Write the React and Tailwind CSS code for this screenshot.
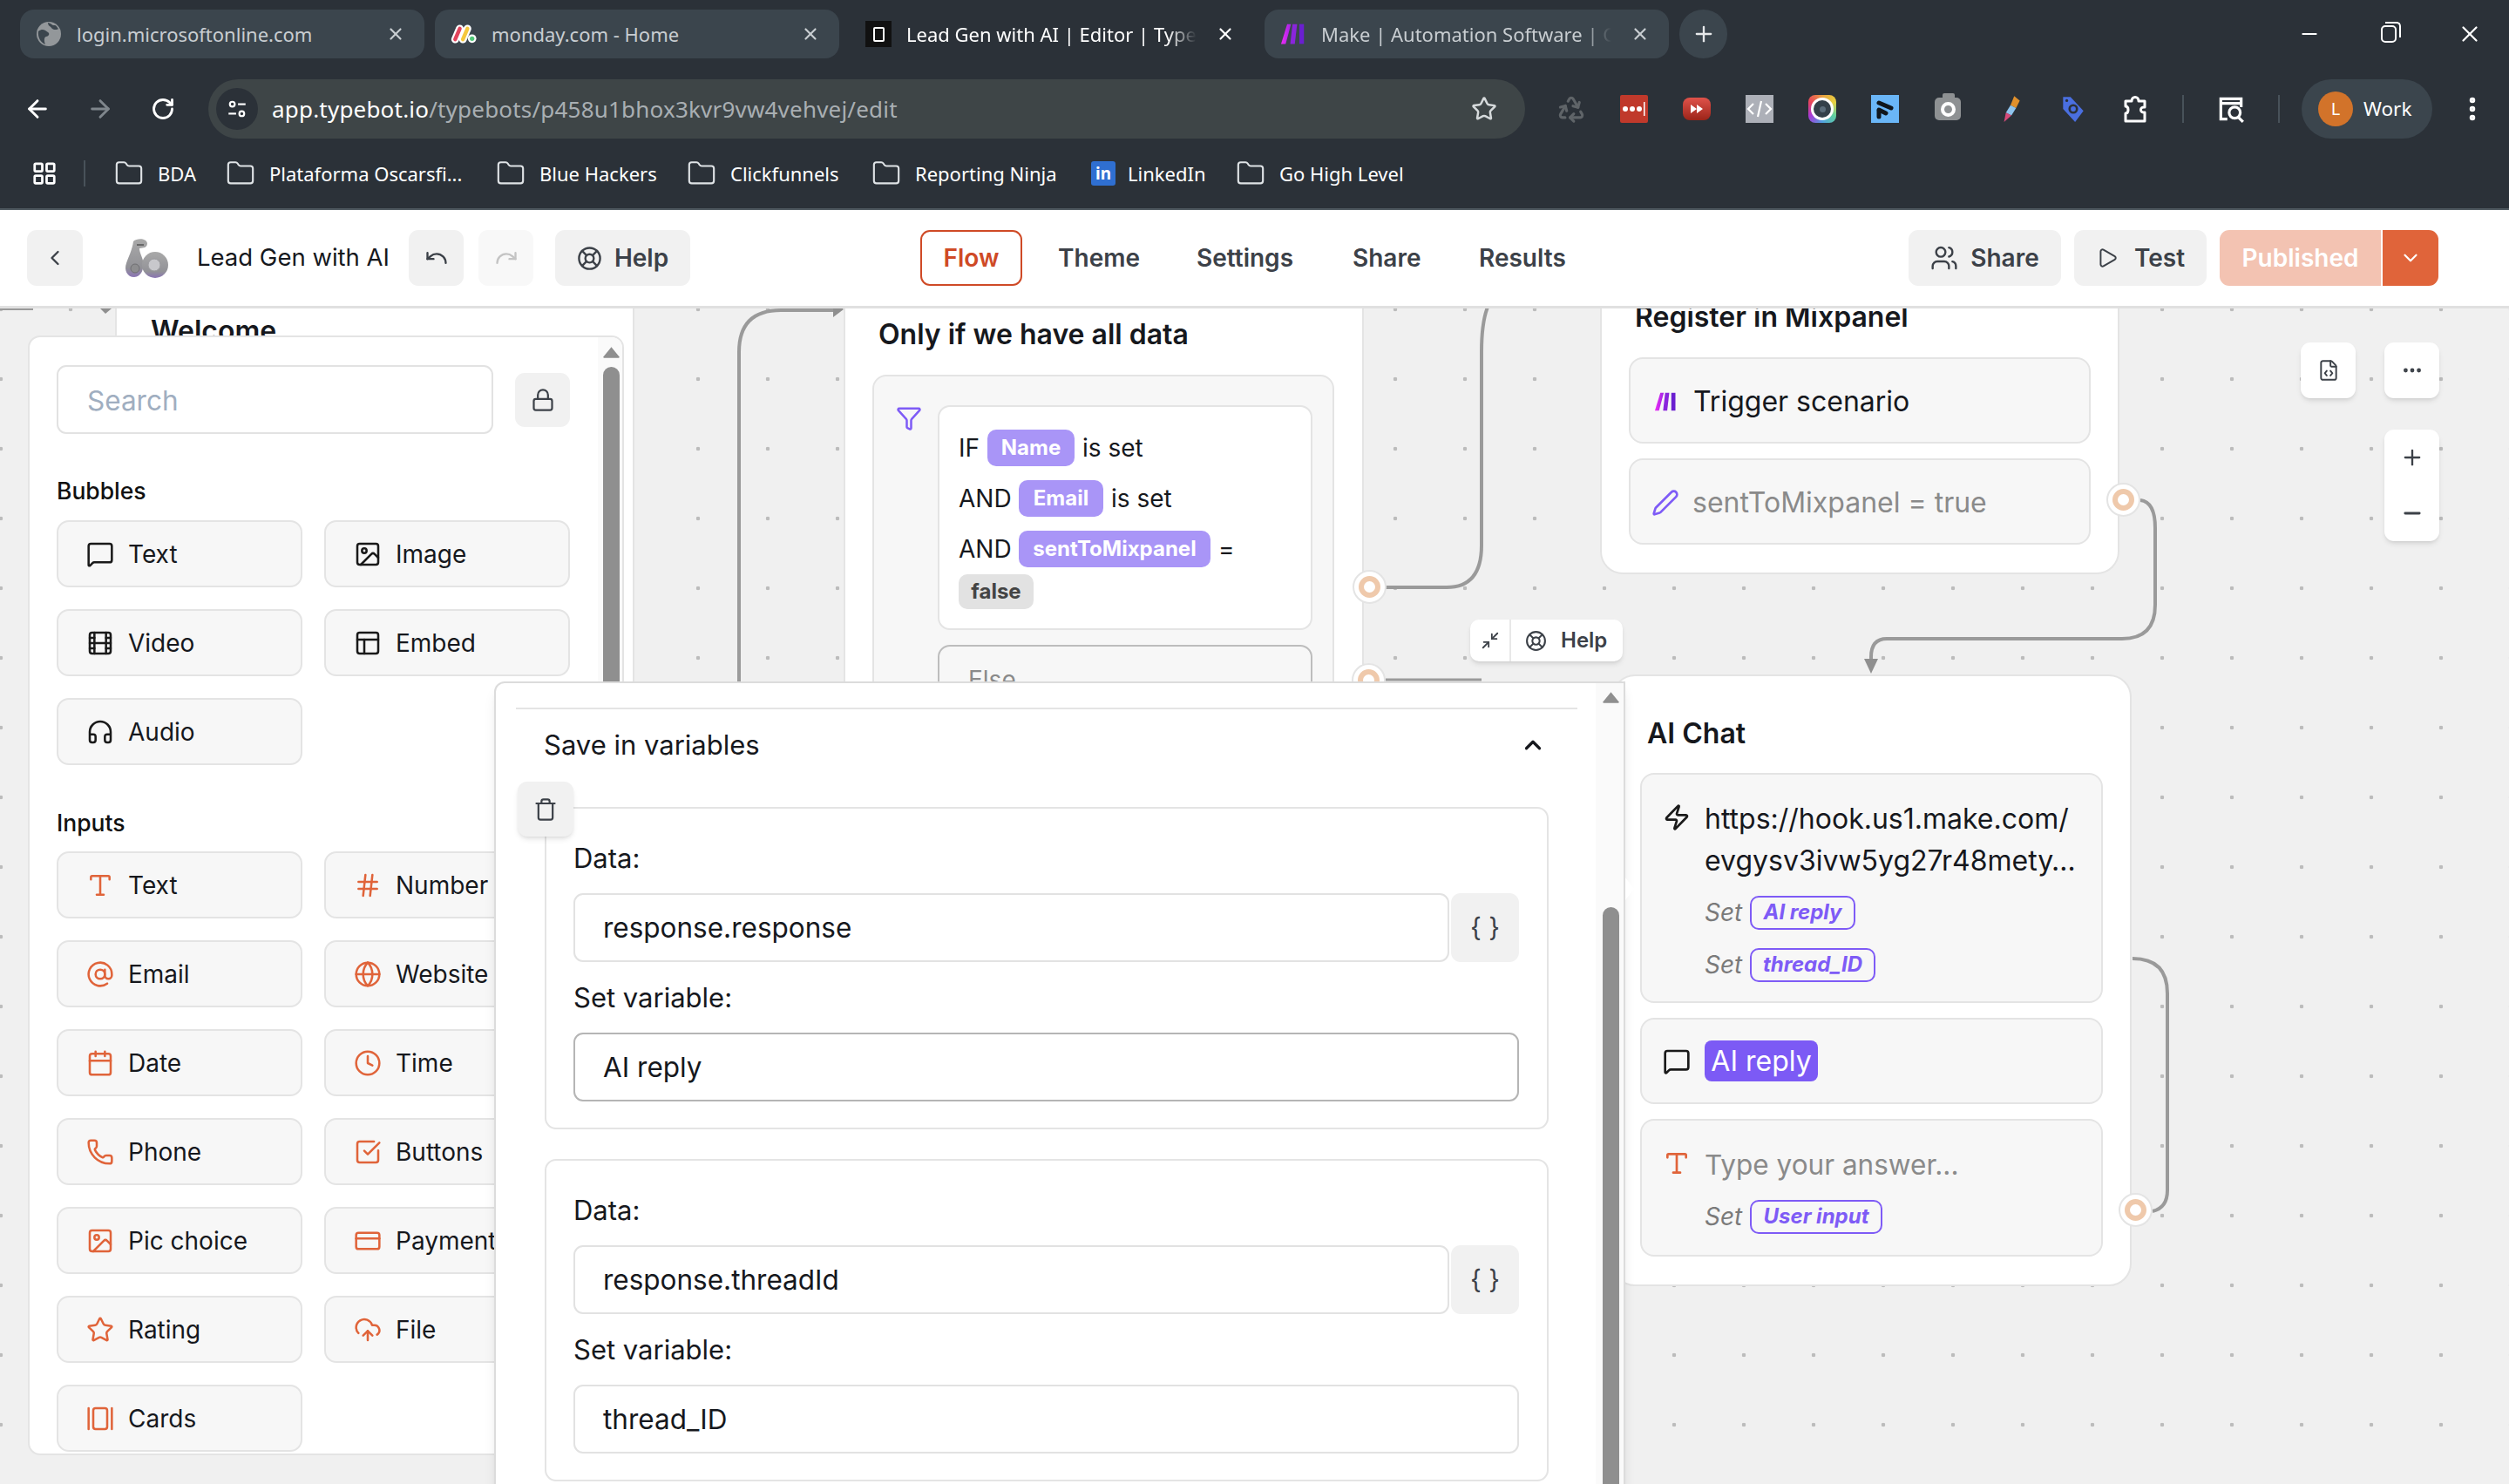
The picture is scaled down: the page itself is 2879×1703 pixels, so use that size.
import React from "react";
import {
  ArrowLeft, ArrowRight, AtSign, Calendar, ChevronDown, ChevronLeft, ChevronUp, Clock, CloudUpload,
  CreditCard, Ellipsis, EllipsisVertical, FileCode, Film, Folder, Funnel, GalleryHorizontal, Globe, Hash,
  Headphones, Image, LayoutGrid, LifeBuoy, Lock, MessageSquare, Minimize2, Minus, PanelsTopLeft, Pen, Phone,
  Play, Plus, Recycle, Redo, RotateCw, SquareCheckBig, Star, Trash, Type, Undo, Users, X, Zap,
} from "lucide-react";

const ui = "font-['Inter',sans-serif]";
const chromeFont = "font-['Noto_Sans',sans-serif]";

const bubbles = [
  { label: "Text", icon: MessageSquare },
  { label: "Image", icon: Image },
  { label: "Video", icon: Film },
  { label: "Embed", icon: PanelsTopLeft },
  { label: "Audio", icon: Headphones },
];

const inputs = [
  { label: "Text", icon: Type },
  { label: "Number", icon: Hash },
  { label: "Email", icon: AtSign },
  { label: "Website", icon: Globe },
  { label: "Date", icon: Calendar },
  { label: "Time", icon: Clock },
  { label: "Phone", icon: Phone },
  { label: "Buttons", icon: SquareCheckBig },
  { label: "Pic choice", icon: Image },
  { label: "Payment", icon: CreditCard },
  { label: "Rating", icon: Star },
  { label: "File", icon: CloudUpload },
  { label: "Cards", icon: GalleryHorizontal },
];

const MakeLogo = ({ className }) => (
  <svg viewBox="0 0 32 28" className={className}>
    <defs>
      <linearGradient id="makeGrad" x1="0" x2="1" y1="0" y2="0">
        <stop offset="0" stopColor="#f02cf5" />
        <stop offset="1" stopColor="#a024e6" />
      </linearGradient>
    </defs>
    <path d="M8 1h5L6 27H0z" fill="url(#makeGrad)" />
    <path d="M15 1h6l-3 26h-6z" fill="#8a25dc" />
    <path d="M24 1h6v26h-6z" fill="#6a1fd0" />
  </svg>
);

const TypebotLogo = () => (
  <svg viewBox="0 0 80 60" className="w-[80px] h-[60px] shrink-0">
    <defs>
      <linearGradient id="tbGrad" x1="0" x2="0" y1="0" y2="1">
        <stop offset="0" stopColor="#a9a9a9" />
        <stop offset="0.75" stopColor="#929297" />
        <stop offset="1" stopColor="#8a74b4" />
      </linearGradient>
    </defs>
    <path d="M23 11C27 7 38 7 39 13C39 19 34 18 30 19C30 24 33 28 34 33C36 42 32 52 24 52C16 52 12 44 15 36C17 30 22 20 23 11z" fill="url(#tbGrad)" />
    <circle cx="48" cy="38" r="15" fill="url(#tbGrad)" />
    <circle cx="47" cy="38" r="7" fill="#c8c8cc" stroke="#9a9a9e" />
    <circle cx="25" cy="42" r="5" fill="#8d8d8f" stroke="#6f6f72" />
    <path d="M27 15h8" stroke="#555" strokeWidth="1.5" />
  </svg>
);

const TuneIcon = () => (
  <svg viewBox="0 0 24 24" className="w-[26px] h-[26px]" fill="none" stroke="#fff" strokeWidth="2">
    <circle cx="7" cy="7" r="2.6" />
    <path d="M13 7h8" />
    <path d="M3 17h8" />
    <circle cx="17" cy="17" r="2.6" />
  </svg>
);

const Tab = ({ title, favicon, active, fade }) => (
  <div className={`w-[464px] h-[56px] rounded-[16px] flex items-center pl-[18px] pr-[22px] ${active ? "" : "bg-[#3b454d]"}`}>
    <div className="w-[30px] h-[30px] flex items-center justify-center shrink-0">{favicon}</div>
    <div className={`ml-[17px] w-[333px] overflow-hidden whitespace-nowrap text-[22px] ${active ? "text-white" : "text-[#c8cdd1]"} ${fade ? "[mask-image:linear-gradient(to_right,black_90%,transparent)]" : ""}`}>
      {title}
    </div>
    <X className={`ml-auto ${active ? "text-white" : "text-[#c8cdd1]"}`} size={22} strokeWidth={2.4} />
  </div>
);

const Ext = ({ children }) => <div className="w-[36px] h-[36px] flex items-center justify-center">{children}</div>;

const Bookmark = ({ label, w }) => (
  <div className="flex items-center gap-[16px]">
    <Folder size={34} strokeWidth={1.5} className="text-[#dfe3e6]" />
    <span className={`${w} whitespace-nowrap text-[22px] text-white`}>{label}</span>
  </div>
);

const HeaderButton = ({ className = "bg-[#f1f1f1] text-[#3c4148]", width = "", children }) => (
  <div className={`h-[64px] rounded-[11px] flex items-center justify-center ${width} ${className}`}>{children}</div>
);

const NavLink = ({ className, children }) => <span className={`text-[28px] font-semibold text-[#3c4148] whitespace-nowrap ${className}`}>{children}</span>;

const ToolCard = ({ label, icon: Icon, accent }) => (
  <div className="h-[77px] rounded-[14px] bg-[#f7f7f7] border-2 border-[#e4e4e4] flex items-center pl-[32px] gap-[16px] whitespace-nowrap">
    <Icon size={32} strokeWidth={1.9} className={accent ? "text-[#e0643a] shrink-0" : "text-[#1a1a1a] shrink-0"} />
    <span className="text-[28px] text-[#16181d]">{label}</span>
  </div>
);

const Triangle = ({ className }) => (
  <svg viewBox="0 0 20 14" className={className}>
    <path d="M10 1L19 12a1 1 0 0 1-1 2H2a1 1 0 0 1-1-2z" fill="#8f8f8f" />
  </svg>
);

const Port = ({ className }) => (
  <div className={`absolute w-[39px] h-[39px] rounded-full bg-white border-2 border-[#e4e4e4] flex items-center justify-center ${className}`}>
    <div className="w-[25px] h-[25px] rounded-full border-[6px] border-[#efc9ab] bg-white" />
  </div>
);

const VarPill = ({ className = "", children }) => (
  <span className={`h-[42px] rounded-[10px] bg-[#a995f7] text-white text-[24px] font-bold flex items-center justify-center ${className}`}>{children}</span>
);

const SetRow = ({ label, className, w }) => (
  <div className={`flex items-center gap-[11px] ${className}`}>
    <span className="w-[41px] italic text-[28px] text-[#7a7a7a]">Set</span>
    <span className={`h-[39px] ${w} rounded-[10px] border-2 border-[#7e5bf6] text-[#7e5bf6] text-[24px] italic font-bold flex items-center justify-center whitespace-nowrap`}>{label}</span>
  </div>
);

const Field = ({ value, className = "border-[#e2e2e2]", width }) => (
  <div className={`h-[79px] rounded-[11px] border-2 bg-white flex items-center pl-[32px] text-[31.5px] text-[#16181d] ${className} ${width}`}>{value}</div>
);

const VariableCard = ({ data, variable, focused, className = "" }) => (
  <div className={`w-[1152px] h-[370px] rounded-[13px] border-2 border-[#e4e4e4] pl-[31px] pr-[32px] ${className}`}>
    <div className="h-[40px] mt-[37px] flex items-center text-[31px] text-[#16181d]">Data:</div>
    <div className="mt-[20px] flex gap-[2px]">
      <Field value={data} width="w-[1005px]" />
      <div className="w-[78px] h-[79px] rounded-[11px] bg-[#f1f1f1] flex items-center justify-center text-[30px] text-[#3c4148]">{"{ }"}</div>
    </div>
    <div className="h-[40px] mt-[21px] flex items-center text-[31px] text-[#16181d]">Set variable:</div>
    <Field value={variable} width="w-[1085px] mt-[20px]" className={focused ? "border-[#b5b5b5]" : "border-[#e2e2e2]"} />
  </div>
);

const App = () => {
  return (
    <div className={`w-[2879px] h-[1703px] overflow-hidden flex flex-col bg-white ${ui}`}>
      {/* Browser chrome */}
      <div className={`bg-[#2b3138] h-[241px] shrink-0 border-b-2 border-[#505a60] ${chromeFont}`}>
        <div className="h-[91px] pt-[11px] pl-[23px] flex gap-[12px]">
          <Tab
            title="login.microsoftonline.com"
            favicon={
              <svg viewBox="0 0 28 28" className="w-[28px] h-[28px]">
                <circle cx="14" cy="14" r="14" fill="#93979a" />
                <path d="M2 11c5-4 8-1 11 1s0 5-2 5-3 4-1 9C5 24 1 18 2 11z" fill="#3b454d" />
                <path d="M13 1c5 1 4 3 7 3s3 2 5 4c-2 2-7 1-8-1s-4-2-4-6z" fill="#3b454d" />
              </svg>
            }
          />
          <Tab
            title="monday.com - Home"
            favicon={
              <svg viewBox="0 0 34 28" className="w-[32px] h-[28px]">
                <path d="M6 21L12 7" stroke="#fff" strokeWidth="10" strokeLinecap="round" />
                <path d="M16 21L22 7" stroke="#fff" strokeWidth="10" strokeLinecap="round" />
                <circle cx="28" cy="20" r="5.5" fill="#fff" />
                <path d="M6 21L12 7" stroke="#e2445c" strokeWidth="5" strokeLinecap="round" />
                <path d="M16 21L22 7" stroke="#f5c73d" strokeWidth="5" strokeLinecap="round" />
                <circle cx="28" cy="20" r="3" fill="#4fc878" />
              </svg>
            }
          />
          <Tab
            active
            fade
            title="Lead Gen with AI | Editor | Typebot"
            favicon={
              <div className="w-[30px] h-[30px] bg-[#111] flex items-center justify-center">
                <div className="w-[13px] h-[17px] border-2 border-white rounded-[2px]" />
              </div>
            }
          />
          <Tab fade title="Make | Automation Software | Connect" favicon={<MakeLogo className="w-[28px] h-[26px]" />} />
          <div className="w-[55px] h-[56px] rounded-full bg-[#3b454d] flex items-center justify-center">
            <Plus size={28} className="text-[#e6e8ea]" />
          </div>
          <div className="ml-[643px] flex items-center h-[56px] gap-[64px] text-white">
            <Minus size={26} />
            <div className="w-[28px] flex justify-center">
              <div className="relative w-[18px] h-[20px] border-2 border-white rounded-[5px]">
                <div className="absolute -top-[6px] left-[3px] w-[18px] h-[18px] border-t-2 border-r-2 border-white rounded-tr-[5px]" />
              </div>
            </div>
            <X size={30} strokeWidth={1.8} />
          </div>
        </div>

        <div className="h-[68px] flex items-center">
          <ArrowLeft size={32} strokeWidth={2.2} className="ml-[27px] text-white" />
          <ArrowRight size={32} strokeWidth={2.2} className="ml-[40px] text-[#7f868c]" />
          <RotateCw size={28} strokeWidth={2.4} className="ml-[42px] text-white" />
          <div className="ml-[38px] w-[1511px] h-[68px] rounded-full bg-[#3e4547] flex items-center pl-[9px] pr-[32px]">
            <div className="w-[48px] h-[48px] rounded-full bg-[#2b3138] flex items-center justify-center">
              <TuneIcon />
            </div>
            <div className="ml-[16px] text-[26px] whitespace-nowrap text-white tracking-[0.2px]">
              app.typebot.io<span className="text-[#a9afb3]">/typebots/p458u1bhox3kvr9vw4vehvej/edit</span>
            </div>
            <Star size={30} strokeWidth={2} className="ml-auto text-[#d6dadc]" />
          </div>

          <div className="ml-[35px] flex items-center gap-[36px]">
            <Ext><Recycle size={34} strokeWidth={2.2} className="text-[#5f6468]" /></Ext>
            <Ext>
              <div className="w-[32px] h-[32px] bg-[#c0392b] rounded-[2px] flex items-center justify-center">
                <svg viewBox="0 0 32 32" className="w-[32px] h-[32px]" fill="#fff">
                  <circle cx="6" cy="16" r="3" />
                  <circle cx="14" cy="16" r="3" />
                  <circle cx="22" cy="16" r="3" />
                  <rect x="27" y="8" width="1.5" height="16" />
                </svg>
              </div>
            </Ext>
            <Ext>
              <div className="w-[32px] h-[26px] bg-gradient-to-b from-[#e0524a] to-[#9c2418] rounded-[8px] flex items-center justify-center">
                <svg viewBox="0 0 16 12" className="w-[16px] h-[12px]" fill="#fff"><path d="M1 1l7 5-7 5zM8 1l7 5-7 5z" /></svg>
              </div>
            </Ext>
            <Ext>
              <div className="w-[32px] h-[32px] bg-[#adb0b8] flex items-center justify-center">
                <svg viewBox="0 0 32 32" className="w-[32px] h-[32px]" fill="none" stroke="#fff" strokeWidth="2.2">
                  <path d="M9 10l-6 6 6 6M23 10l6 6-6 6M18 7l-4 18" />
                </svg>
              </div>
            </Ext>
            <Ext>
              <div className="w-[32px] h-[32px] rounded-[8px] bg-[conic-gradient(#e8a040,#e8d040,#60d0a0,#50a0e0,#a83ad8,#e8445a,#e8a040)] flex items-center justify-center">
                <div className="w-[26px] h-[26px] rounded-full bg-white flex items-center justify-center">
                  <div className="w-[20px] h-[20px] rounded-full bg-[#34404a] flex items-center justify-center">
                    <div className="w-[7px] h-[7px] rounded-full bg-[#5b6c7a]" />
                  </div>
                </div>
              </div>
            </Ext>
            <Ext>
              <div className="w-[32px] h-[32px] bg-[#6ab6f7] flex items-center justify-center">
                <svg viewBox="0 0 32 32" className="w-[32px] h-[32px]" fill="none" stroke="#10161c" strokeWidth="5" strokeLinecap="round">
                  <path d="M9 9l14 6" />
                  <path d="M9 17l8 4" />
                  <path d="M9 19v6" />
                </svg>
              </div>
            </Ext>
            <Ext>
              <div className="relative w-[30px] h-[26px] rounded-[5px] bg-[#8e9193] flex items-center justify-center">
                <div className="absolute -top-[5px] left-[9px] w-[14px] h-[6px] bg-[#8e9193] rounded-t-[2px]" />
                <div className="w-[17px] h-[17px] rounded-full border-[4px] border-white" />
              </div>
            </Ext>
            <Ext>
              <svg viewBox="0 0 24 32" className="w-[26px] h-[34px]">
                <path d="M16 2l6 5-4 8-6-3z" fill="#e0902c" />
                <path d="M12 12l6 3-5 8-6-3z" fill="#8fc4ee" />
                <path d="M7 20l6 3-8 7z" fill="#d64a7a" />
              </svg>
            </Ext>
            <Ext>
              <svg viewBox="0 0 28 32" className="w-[30px] h-[34px]" fill="none">
                <path d="M3 3h8l14 15-9 12L3 16z" fill="#4a6fe0" />
                <circle cx="14" cy="16" r="4" stroke="#2b3138" strokeWidth="2.5" />
                <circle cx="7" cy="7" r="1.5" fill="#2b3138" />
              </svg>
            </Ext>
            <Ext>
              <svg viewBox="0 0 32 34" className="w-[32px] h-[34px]" fill="none" stroke="#fff" strokeWidth="3" strokeLinejoin="round">
                <path d="M4 8h7c0-6 8-6 8 0h7v7c-6-1-6 7 0 6v10H4v-9c4 0 4-8 0-8z" />
              </svg>
            </Ext>
          </div>
          <div className="ml-[35px] w-[2px] h-[32px] bg-[#48525a]" />
          <div className="ml-[36px] w-[36px] flex justify-center">
            <svg viewBox="0 0 32 32" className="w-[34px] h-[34px]" fill="none" stroke="#fff" strokeWidth="3">
              <path d="M12 27H5V5h22v9" />
              <path d="M5 10h22" />
              <circle cx="20" cy="20" r="6" />
              <path d="M24 25l5 5" />
            </svg>
          </div>
          <div className="ml-[36px] w-[2px] h-[32px] bg-[#48525a]" />
          <div className="ml-[25px] w-[150px] h-[68px] rounded-full bg-[#3b454d] flex items-center pl-[19px]">
            <div className="w-[40px] h-[40px] rounded-full bg-[#d2732a] text-white text-[20px] flex items-center justify-center">L</div>
            <span className="ml-[12px] text-[22.5px] text-white">Work</span>
          </div>
          <EllipsisVertical size={34} strokeWidth={2.6} className="ml-[29px] text-white" />
        </div>

        <div className="h-[80px] flex items-center">
          <LayoutGrid size={30} strokeWidth={2.2} className="ml-[36px] text-white" />
          <div className="ml-[30px] w-[2px] h-[30px] bg-[#48525a]" />
          <div className="ml-[33px] flex items-center gap-[36px]">
            <Bookmark label="BDA" w="w-[42px]" />
            <Bookmark label="Plataforma Oscarsfi..." w="w-[224px]" />
            <Bookmark label="Blue Hackers" w="w-[133px]" />
            <Bookmark label="Clickfunnels" w="w-[126px]" />
            <Bookmark label="Reporting Ninja" w="w-[166px]" />
            <div className="flex items-center gap-[14px]">
              <div className="w-[28px] h-[28px] rounded-[3px] bg-[#2f6fd1] flex items-center justify-center text-white text-[19px] font-bold">in</div>
              <span className="w-[88px] whitespace-nowrap text-[22px] text-white">LinkedIn</span>
            </div>
            <Bookmark label="Go High Level" w="w-[150px]" />
          </div>
        </div>
      </div>

      {/* Editor header */}
      <div className="h-[113px] shrink-0 bg-white border-b-[3px] border-[#e0e0e0] flex items-center pl-[31px]">
        <HeaderButton width="w-[64px]"><ChevronLeft size={28} strokeWidth={2} /></HeaderButton>
        <div className="ml-[35px]"><TypebotLogo /></div>
        <span className="ml-[16px] w-[218px] text-[27.5px] text-[#16181d] whitespace-nowrap">Lead Gen with AI</span>
        <HeaderButton width="ml-[25px] w-[63px]"><Undo size={28} strokeWidth={2} /></HeaderButton>
        <HeaderButton width="ml-[17px] w-[63px]" className="bg-[#f8f8f8] text-[#c4c4c4]"><Redo size={28} strokeWidth={2} /></HeaderButton>
        <HeaderButton width="ml-[25px] w-[155px] gap-[14px] text-[28px] font-semibold bg-[#f1f1f1] text-[#3c4148]" className="">
          <LifeBuoy size={29} strokeWidth={2} />
          Help
        </HeaderButton>
        <div className="ml-[264px] w-[117px] h-[64px] rounded-[11px] border-2 border-[#cf4a26] flex items-center justify-center text-[28px] font-semibold text-[#cf4a26]">Flow</div>
        <NavLink className="ml-[41px] w-[95px]">Theme</NavLink>
        <NavLink className="ml-[64px] w-[115px]">Settings</NavLink>
        <NavLink className="ml-[64px] w-[80px]">Share</NavLink>
        <NavLink className="ml-[65px] w-[102px]">Results</NavLink>
        <HeaderButton width="ml-[391px] w-[175px] gap-[14px] text-[28px] font-semibold">
          <Users size={32} strokeWidth={1.8} />
          Share
        </HeaderButton>
        <HeaderButton width="ml-[15px] w-[152px] gap-[18px] text-[28px] font-semibold">
          <Play size={26} strokeWidth={1.8} />
          Test
        </HeaderButton>
        <div className="ml-[15px] flex gap-[2px]">
          <div className="w-[185px] h-[64px] rounded-l-[11px] bg-[#f3c3b2] text-white text-[28px] font-semibold flex items-center justify-center">Published</div>
          <div className="w-[64px] h-[64px] rounded-r-[11px] bg-[#e0643a] flex items-center justify-center">
            <ChevronDown size={26} strokeWidth={2} className="text-white" />
          </div>
        </div>
      </div>

      {/* Canvas */}
      <div className="relative flex-1 overflow-hidden bg-[#f0f0f0] bg-[radial-gradient(circle,#bcbcbc_2px,transparent_2.6px)] bg-[length:80px_80px] bg-[position:-39px_-39px]">
        <svg className="absolute inset-0 w-[2879px] h-[1349px]" fill="none" stroke="#9a9a9a" strokeWidth="4">
          <path d="M0 1H38" strokeWidth="2" />
          <path d="M115 0h13l-7 6z" fill="#8f8f8f" stroke="none" />
          <path d="M848 430V50Q848 2 896 2H958" />
          <path d="M956 -8l12 9-12 9z" fill="#8f8f8f" stroke="none" />
          <path d="M1590 320H1660Q1700 320 1700 272V50Q1700 14 1708 -4" />
          <path d="M1590 426H1700" strokeWidth="3" />
          <path d="M2456 220Q2473 222 2473 252V340Q2473 379 2435 379H2165Q2147 379 2147 400V408" />
          <path d="M2139 402h16l-8 17z" fill="#8f8f8f" stroke="none" />
          <path d="M2470 1036Q2487 1032 2487 1012V786Q2487 746 2447 746" />
        </svg>

        {/* Welcome group, mostly behind the blocks panel */}
        <div className="absolute left-[132px] top-[-40px] w-[596px] h-[600px] bg-white border-x-2 border-[#e4e4e4] pl-[39px] pt-[46px]">
          <div className="h-[40px] flex items-center text-[32px] font-semibold text-[#16181d]">Welcome</div>
        </div>

        {/* Only if we have all data */}
        <div className="absolute left-[968px] top-[-40px] w-[597px] h-[1000px] bg-white border-x-2 border-[#e4e4e4]">
          <div className="mt-[50px] ml-[38px] h-[40px] flex items-center text-[32px] font-semibold text-[#16181d]">Only if we have all data</div>
          <div className="mt-[26px] ml-[31px] w-[530px] h-[600px] rounded-[16px] bg-[#f7f7f7] border-2 border-[#e4e4e4] pt-[33px] pl-[25px] flex gap-[18px]">
            <Funnel size={30} strokeWidth={2} className="text-[#7e5bf6] shrink-0" />
            <div className="w-[430px]">
              <div className="h-[258px] rounded-[14px] bg-white border-2 border-[#e4e4e4] pl-[22px] pt-[26px] flex flex-col gap-[16px] text-[28px] text-[#16181d]">
                <div className="flex items-center gap-[9px]">
                  <span className="w-[24px]">IF</span>
                  <VarPill className="w-[100px]">Name</VarPill>
                  <span>is set</span>
                </div>
                <div className="flex items-center gap-[9px]">
                  <span className="w-[60px]">AND</span>
                  <VarPill className="w-[97px]">Email</VarPill>
                  <span>is set</span>
                </div>
                <div className="flex items-center gap-[9px]">
                  <span className="w-[60px]">AND</span>
                  <VarPill className="w-[220px]">sentToMixpanel</VarPill>
                  <span>=</span>
                </div>
                <span className="-mt-[8px] w-[86px] h-[40px] rounded-[10px] bg-[#e2e2e2] text-[#444] text-[24px] font-bold flex items-center justify-center">false</span>
              </div>
              <div className="mt-[17px] h-[100px] rounded-[14px] border-2 border-[#bdbdbd] bg-[#f7f7f7] pl-[33px] pt-[17px] text-[28px] text-[#8a8a8a]">Else</div>
            </div>
          </div>
        </div>
        <Port className="left-[1552px] top-[300px]" />
        <Port className="left-[1551px] top-[407px]" />

        {/* Register in Mixpanel */}
        <div className="absolute left-[1836px] top-[-60px] w-[596px] h-[365px] rounded-b-[26px] bg-white border-2 border-t-0 border-[#e4e4e4]">
          <div className="mt-[50px] ml-[38px] h-[40px] flex items-center text-[32px] font-semibold text-[#16181d]">Register in Mixpanel</div>
          <div className="mt-[26px] ml-[31px] w-[530px] flex flex-col gap-[17px]">
            <div className="h-[99px] rounded-[16px] bg-[#f7f7f7] border-2 border-[#e4e4e4] flex items-center pl-[24px] pt-[3px] gap-[15px] text-[32px] text-[#16181d]">
              <MakeLogo className="w-[33px] h-[22px] shrink-0" />
              Trigger scenario
            </div>
            <div className="h-[99px] rounded-[16px] bg-[#f7f7f7] border-2 border-[#e4e4e4] flex items-center pl-[24px] pt-[3px] gap-[15px] text-[32px] text-[#8a8a8a]">
              <Pen size={32} strokeWidth={2} className="text-[#7e5bf6] shrink-0" />
              sentToMixpanel = true
            </div>
          </div>
        </div>
        <Port className="left-[2417px] top-[200px]" />

        {/* AI Chat */}
        <div className="absolute left-[1850px] top-[420px] w-[596px] h-[702px] rounded-[26px] bg-white border-2 border-[#e4e4e4]">
          <div className="mt-[46px] ml-[38px] h-[40px] flex items-center text-[32px] font-semibold text-[#16181d]">AI Chat</div>
          <div className="mt-[25px] ml-[30px] w-[531px] flex flex-col gap-[17px]">
            <div className="h-[264px] rounded-[16px] bg-[#f7f7f7] border-2 border-[#e4e4e4] pl-[24px] pt-[27px] flex gap-[16px]">
              <Zap size={32} strokeWidth={2} className="mt-[6px] text-[#1a1a1a] shrink-0" />
              <div>
                <div className="text-[32px] leading-[48px] text-[#16181d] whitespace-nowrap">
                  https://hook.us1.make.com/
                  <br />
                  evgysv3ivw5yg27r48mety…
                </div>
                <SetRow label="AI reply" w="w-[121px]" className="mt-[14px]" />
                <SetRow label="thread_ID" w="w-[144px]" className="mt-[18px]" />
              </div>
            </div>
            <div className="h-[99px] rounded-[16px] bg-[#f7f7f7] border-2 border-[#e4e4e4] pl-[24px] flex items-center gap-[16px]">
              <MessageSquare size={32} strokeWidth={2} className="text-[#1a1a1a] shrink-0" />
              <span className="w-[130px] h-[47px] rounded-[8px] bg-[#7c5af5] text-white text-[32px] flex items-center justify-center">AI reply</span>
            </div>
            <div className="h-[158px] rounded-[16px] bg-[#f7f7f7] border-2 border-[#e4e4e4] pl-[24px] pt-[30px] flex gap-[16px]">
              <Type size={32} strokeWidth={2} className="mt-[3px] text-[#e0643a] shrink-0" />
              <div>
                <div className="h-[42px] flex items-center text-[31.5px] text-[#8a8a8a]">Type your answer...</div>
                <SetRow label="User input" w="w-[152px]" className="mt-[17px]" />
              </div>
            </div>
          </div>
        </div>
        <Port className="left-[2431px] top-[1015px]" />

        {/* Help floater */}
        <div className="absolute left-[1687px] top-[357px] w-[175px] h-[48px] rounded-[10px] bg-white shadow-md flex items-center text-[#3c4148]">
          <div className="w-[47px] h-full border-r-2 border-[#e8e8e8] flex items-center justify-center">
            <Minimize2 size={22} strokeWidth={2} />
          </div>
          <LifeBuoy size={25} strokeWidth={2} className="ml-[16px]" />
          <span className="ml-[16px] text-[24px] font-semibold">Help</span>
        </div>

        {/* Canvas tools */}
        <div className="absolute left-[2640px] top-[39px] w-[63px] h-[64px] rounded-[11px] bg-white shadow-md flex items-center justify-center text-[#3c4148]">
          <FileCode size={26} strokeWidth={1.8} />
        </div>
        <div className="absolute left-[2736px] top-[39px] w-[63px] h-[64px] rounded-[11px] bg-white shadow-md flex items-center justify-center text-[#3c4148]">
          <Ellipsis size={26} strokeWidth={2.4} />
        </div>
        <div className="absolute left-[2736px] top-[139px] w-[63px] h-[128px] rounded-[11px] bg-white shadow-md flex flex-col items-center justify-around text-[#3c4148]">
          <Plus size={28} strokeWidth={2} />
          <Minus size={28} strokeWidth={2.4} />
        </div>

        {/* Blocks side panel */}
        <div className="absolute left-[32px] top-[31px] w-[684px] h-[1285px] rounded-[14px] bg-white border-2 border-[#e4e4e4] overflow-hidden pl-[31px] pt-[32px]">
          <div className="w-[589px] flex items-center gap-[25px]">
            <div className="w-[501px] h-[79px] rounded-[11px] border-2 border-[#e2e2e2] flex items-center pl-[33px] pt-[3px] text-[31.5px] text-[#a0aec0]">Search</div>
            <div className="w-[63px] h-[62px] rounded-[11px] bg-[#f1f1f1] flex items-center justify-center text-[#3c4148]">
              <Lock size={28} strokeWidth={1.9} />
            </div>
          </div>
          <div className="mt-[46px] h-[40px] flex items-center text-[26.5px] font-medium text-[#111]">Bubbles</div>
          <div className="mt-[13px] w-[589px] grid grid-cols-2 gap-[25px]">
            {bubbles.map((item) => (
              <ToolCard key={item.label} label={item.label} icon={item.icon} />
            ))}
          </div>
          <div className="mt-[47px] h-[40px] flex items-center text-[26.5px] font-medium text-[#111]">Inputs</div>
          <div className="mt-[12px] w-[589px] grid grid-cols-2 gap-[25px]">
            {inputs.map((item) => (
              <ToolCard key={item.label} label={item.label} icon={item.icon} accent />
            ))}
          </div>
          <div className="absolute right-0 top-0 w-[28px] pl-[3px] h-full bg-[#fafafa] flex flex-col items-center">
            <Triangle className="mt-[10px] w-[19px] h-[14px]" />
            <div className="mt-[10px] w-[19px] h-[700px] rounded-full bg-[#8f8f8f]" />
          </div>
        </div>

        {/* Settings popover */}
        <div className="absolute left-[567px] top-[428px] w-[1298px] h-[1000px] rounded-tl-[12px] bg-white border-2 border-[#dcdcdc] shadow-lg">
          <div className="relative ml-[23px] w-[1218px] mt-[28px] border-t-2 border-[#e4e4e4]">
            <div className="pl-[32px] pr-[36px] h-[82px] flex items-center justify-between text-[31px] text-[#16181d]">
              Save in variables
              <ChevronUp size={30} strokeWidth={2.6} />
            </div>
            <div className="ml-[33px] mt-[30px] flex flex-col gap-[34px]">
              <VariableCard data="response.response" variable="AI reply" focused />
              <VariableCard data="response.threadId" variable="thread_ID" />
            </div>
            <div className="absolute left-[2px] top-[83px] w-[64px] h-[63px] rounded-[11px] bg-[#f1f1f1] shadow-md flex items-center justify-center text-[#3c4148]">
              <Trash size={28} strokeWidth={1.9} />
            </div>
          </div>
          <div className="absolute right-0 top-0 w-[32px] pl-[3px] h-full bg-[#fafafa] flex flex-col items-center">
            <Triangle className="mt-[9px] w-[19px] h-[14px]" />
            <div className="mt-[234px] w-[19px] h-[700px] rounded-full bg-[#8f8f8f]" />
          </div>
          <div className="absolute left-[1296px] top-[223px] w-0 h-0 border-y-[13px] border-y-transparent border-l-[10px] border-l-white" />
        </div>
      </div>
    </div>
  );
};

export default App;
